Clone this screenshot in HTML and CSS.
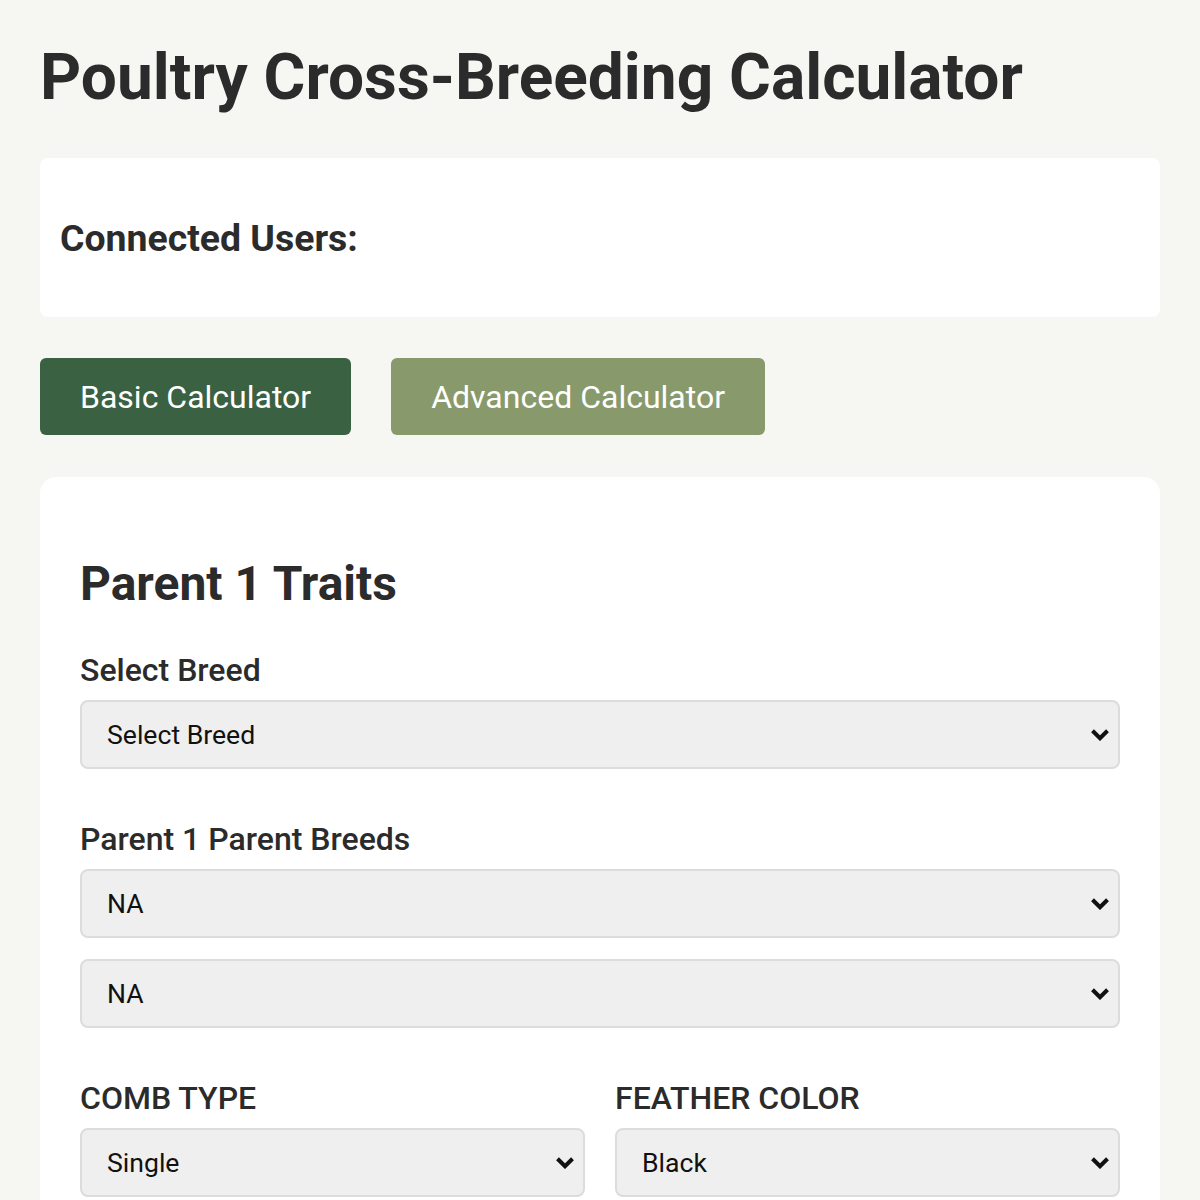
FILE: index.html
```html
<!DOCTYPE html>
<html>
<head>
<meta charset="utf-8">
<link rel="stylesheet" href="styles.css">
</head>
<body>
<h1 class="title">Poultry Cross-Breeding Calculator</h1>
<div class="users-card">
  <h3 class="users-title">Connected Users:</h3>
</div>
<div class="tabs">
  <button class="tab tab-active">Basic Calculator</button>
  <button class="tab tab-inactive">Advanced Calculator</button>
</div>
<div class="main-card">
  <h2 class="section-title">Parent 1 Traits</h2>
  <div class="field">
    <label class="label">Select Breed</label>
    <div class="select"><span>Select Breed</span><svg class="chev" viewBox="0 0 16 10"><path d="M2 2 L8 8 L14 2" fill="none" stroke="#111" stroke-width="3.2"/></svg></div>
  </div>
  <div class="field">
    <label class="label">Parent 1 Parent Breeds</label>
    <div class="select"><span>NA</span><svg class="chev" viewBox="0 0 16 10"><path d="M2 2 L8 8 L14 2" fill="none" stroke="#111" stroke-width="3.2"/></svg></div>
    <div class="select select-gap"><span>NA</span><svg class="chev" viewBox="0 0 16 10"><path d="M2 2 L8 8 L14 2" fill="none" stroke="#111" stroke-width="3.2"/></svg></div>
  </div>
  <div class="grid">
    <div class="field">
      <label class="label upper">COMB TYPE</label>
      <div class="select"><span>Single</span><svg class="chev" viewBox="0 0 16 10"><path d="M2 2 L8 8 L14 2" fill="none" stroke="#111" stroke-width="3.2"/></svg></div>
    </div>
    <div class="field">
      <label class="label upper">FEATHER COLOR</label>
      <div class="select"><span>Black</span><svg class="chev" viewBox="0 0 16 10"><path d="M2 2 L8 8 L14 2" fill="none" stroke="#111" stroke-width="3.2"/></svg></div>
    </div>
  </div>
</div>
</body>
</html>
```
FILE: styles.css
```css
html, body { margin: 0; padding: 0; }
body {
  background: #f6f6f2;
  font-family: Roboto, "Liberation Sans", sans-serif;
  color: #2b2b2b;
  padding: 40px;
}
.title {
  font-size: 64px;
  font-weight: 700;
  margin: 0 0 43px 0;
  line-height: 75px;
  color: #2b2b2b;
}
.users-card {
  background: #fff;
  border-radius: 8px;
  padding: 0 20px;
  height: 159px;
  display: flex;
  align-items: center;
}
.users-title {
  font-size: 37.4px;
  font-weight: 700;
  margin: 0;
}
.tabs {
  display: flex;
  gap: 40px;
  margin-top: 41px;
}
.tab {
  height: 77px;
  padding: 0 40px;
  border: none;
  border-radius: 6px;
  color: #fff;
  font-family: Roboto, "Liberation Sans", sans-serif;
  font-size: 32px;
  font-weight: 400;
}
.tab-active { background: #3a6142; }
.tab-inactive { background: #88996b; }
.main-card {
  background: #fff;
  border-radius: 16px;
  margin-top: 42px;
  padding: 40px;
  padding-top: 79px;
  min-height: 800px;
}
.section-title {
  font-size: 48px;
  font-weight: 700;
  margin: 0 0 39px 0;
  line-height: 56px;
}
.field { margin-bottom: 51px; }
.label {
  display: block;
  font-size: 32px;
  font-weight: 500;
  line-height: 38px;
  margin-bottom: 11px;
}
.select {
  box-sizing: border-box;
  height: 69px;
  background: #efefef;
  border: 2px solid #dcdcdc;
  border-radius: 8px;
  display: flex;
  align-items: center;
  justify-content: space-between;
  padding: 0 8px 0 25px;
  font-size: 26.6px;
  color: #111;
}
.select-gap { margin-top: 21px; }
.chev { width: 20px; height: 13px; }
.grid {
  display: grid;
  grid-template-columns: 1fr 1fr;
  gap: 30px;
}
.upper { text-transform: uppercase; }
```
